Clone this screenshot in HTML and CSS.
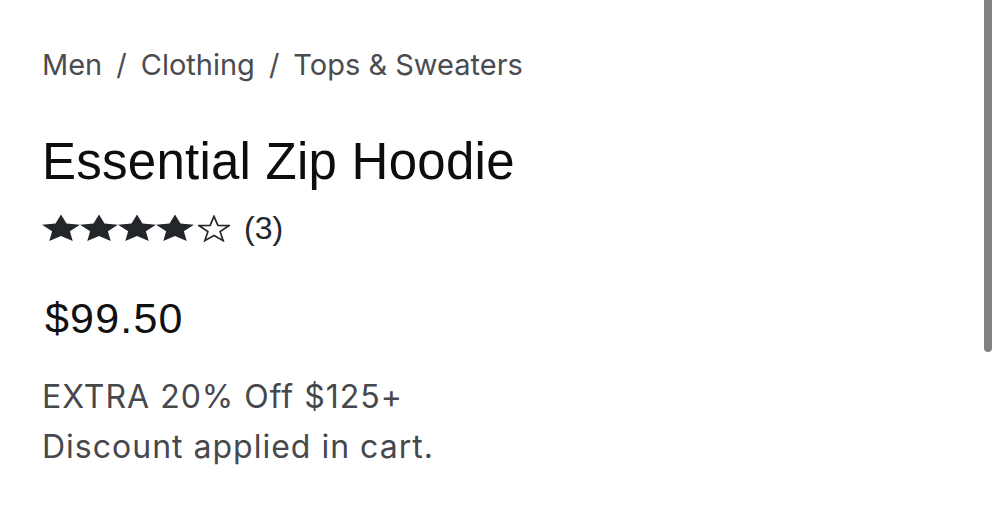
FILE: index.html
```html
<!DOCTYPE html>
<html>
<head>
<meta charset="utf-8">
<link rel="stylesheet" href="styles.css">
</head>
<body>
<div class="page">
  <main class="product">
    <nav class="crumbs">
      <span>Men</span><span class="sep">/</span><span>Clothing</span><span class="sep">/</span><span>Tops &amp; Sweaters</span>
    </nav>
    <h1 class="title">Essential Zip Hoodie</h1>
    <div class="rating">
      <span class="stars">
        <svg class="star" viewBox="0 0 24 24" preserveAspectRatio="none"><path d="M12 0.4L15.47 8.23L23.98 9.11L17.61 14.82L19.41 23.19L12 18.9L4.59 23.19L6.39 14.82L0.02 9.11L8.53 8.23Z"/></svg>
        <svg class="star" viewBox="0 0 24 24" preserveAspectRatio="none"><path d="M12 0.4L15.47 8.23L23.98 9.11L17.61 14.82L19.41 23.19L12 18.9L4.59 23.19L6.39 14.82L0.02 9.11L8.53 8.23Z"/></svg>
        <svg class="star" viewBox="0 0 24 24" preserveAspectRatio="none"><path d="M12 0.4L15.47 8.23L23.98 9.11L17.61 14.82L19.41 23.19L12 18.9L4.59 23.19L6.39 14.82L0.02 9.11L8.53 8.23Z"/></svg>
        <svg class="star" viewBox="0 0 24 24" preserveAspectRatio="none"><path d="M12 0.4L15.47 8.23L23.98 9.11L17.61 14.82L19.41 23.19L12 18.9L4.59 23.19L6.39 14.82L0.02 9.11L8.53 8.23Z"/></svg>
        <svg class="star empty" viewBox="0 0 24 24" preserveAspectRatio="none"><path vector-effect="non-scaling-stroke" d="M12 1.2L14.9 9.2L23.2 9.5L16.6 14.8L18.9 22.8L12 18.3L5.1 22.8L7.4 14.8L0.8 9.5L9.1 9.2Z"/></svg>
      </span>
      <span class="count">(3)</span>
    </div>
    <div class="price">$99.50</div>
    <p class="promo">EXTRA 20% Off $125+<br>Discount applied in cart.</p>
  </main>
  <div class="scrollbar"><div class="thumb"></div></div>
</div>
</body>
</html>
```
FILE: styles.css
```css
html, body {
  margin: 0;
  padding: 0;
  background: #fff;
}
.page {
  display: flex;
  width: 1000px;
  height: 507px;
  overflow: hidden;
}
.product {
  flex: 1;
  padding: 45px 0 0 42px;
  font-family: Inter, "Liberation Sans", sans-serif;
}
.crumbs {
  display: flex;
  gap: 14px;
  font-size: 29px;
  color: #4a4c50;
  line-height: 40px;
}
.title {
  margin: 49px 0 0;
  font-family: "Liberation Sans", Arial, sans-serif;
  font-weight: 400;
  font-size: 51px;
  line-height: 56px;
  letter-spacing: 0.25px;
  color: #0d0d0d;
}
.rating {
  display: flex;
  align-items: center;
  margin-top: 21px;
  height: 34px;
}
.stars {
  display: flex;
  align-items: center;
}
.star {
  width: 38px;
  height: 28px;
  fill: #23262b;
}
.star.empty {
  width: 32px;
  height: 27px;
  margin-left: 4px;
  fill: none;
  stroke: #23262b;
  stroke-width: 1.7;
}
.count {
  margin-left: 14px;
  font-family: "Liberation Sans", Arial, sans-serif;
  font-size: 32px;
  color: #23262b;
}
.price {
  margin-top: 49px;
  font-family: "Liberation Sans", Arial, sans-serif;
  font-size: 43px;
  line-height: 48px;
  letter-spacing: 1.2px;
  color: #111;
  padding-left: 3px;
}
.promo {
  margin: 30px 0 0;
  font-size: 32px;
  line-height: 50px;
  letter-spacing: 1px;
  color: #46484c;
}
.scrollbar {
  width: 15px;
}
.thumb {
  width: 8px;
  height: 352px;
  background: #828282;
  border-radius: 0 0 4px 4px;
  margin-left: -1px;
}
```
